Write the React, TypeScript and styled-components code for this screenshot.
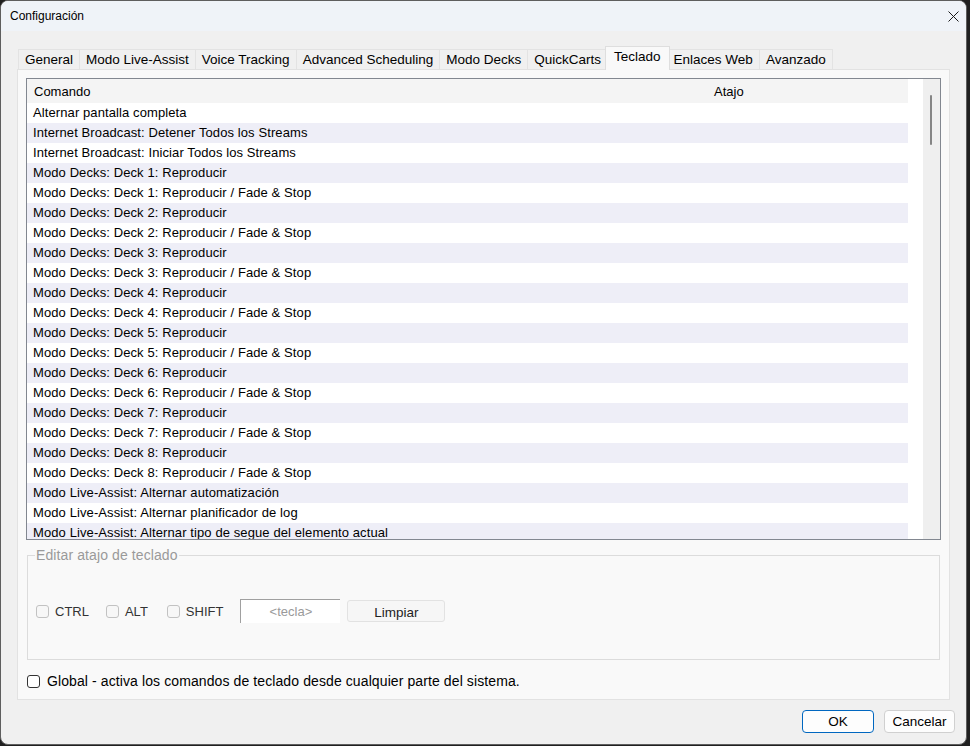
import React from "react";
import styled, { createGlobalStyle } from "styled-components";

const GlobalStyle = createGlobalStyle`
  html, body {
    margin: 0;
    padding: 0;
    background: #202020;
  }
  body {
    font-family: "Liberation Sans", Arial, sans-serif;
    font-size: 13px;
    color: #000;
  }
  * {
    box-sizing: border-box;
  }
`;

const TABS = [
  "General",
  "Modo Live-Assist",
  "Voice Tracking",
  "Advanced Scheduling",
  "Modo Decks",
  "QuickCarts",
  "Teclado",
  "Enlaces Web",
  "Avanzado",
];

const COMMANDS: string[] = [
  "Alternar pantalla completa",
  "Internet Broadcast: Detener Todos los Streams",
  "Internet Broadcast: Iniciar Todos los Streams",
];
for (let i = 1; i <= 8; i++) {
  COMMANDS.push(`Modo Decks: Deck ${i}: Reproducir`);
  COMMANDS.push(`Modo Decks: Deck ${i}: Reproducir / Fade & Stop`);
}
COMMANDS.push(
  "Modo Live-Assist: Alternar automatización",
  "Modo Live-Assist: Alternar planificador de log",
  "Modo Live-Assist: Alternar tipo de segue del elemento actual"
);

export default function App() {
  return (
    <>
      <GlobalStyle />
      <Window>
        <TitleBar>
          <Title>Configuración</Title>
          <svg width="11" height="11" viewBox="0 0 11 11" style={{ marginRight: 7 }}>
            <path d="M0.5 0.5 L10.5 10.5 M10.5 0.5 L0.5 10.5" stroke="#1a1a1a" strokeWidth="1" />
          </svg>
        </TitleBar>
        <Body>
          <TabStrip>
            {TABS.map((t) => (
              <Tab key={t} $active={t === "Teclado"}>
                {t}
              </Tab>
            ))}
          </TabStrip>
          <Panel>
            <ListBox>
              <ListContent>
                <HeaderRow>
                  <span>Comando</span>
                  <span>Atajo</span>
                </HeaderRow>
                <Rows>
                  {COMMANDS.map((c, i) => (
                    <Row key={c} $alt={i % 2 === 1}>
                      <span>{c}</span>
                      <span />
                    </Row>
                  ))}
                </Rows>
              </ListContent>
              <ScrollTrack>
                <ScrollThumb />
              </ScrollTrack>
            </ListBox>

            <GroupBox>
              <Legend>Editar atajo de teclado</Legend>
              <KeyRow>
                <CheckLabel $gap={17}>
                  <CheckBox $disabled />
                  CTRL
                </CheckLabel>
                <CheckLabel $gap={19}>
                  <CheckBox $disabled />
                  ALT
                </CheckLabel>
                <CheckLabel $gap={17}>
                  <CheckBox $disabled />
                  SHIFT
                </CheckLabel>
                <KeyField>&lt;tecla&gt;</KeyField>
                <FlatButton>Limpiar</FlatButton>
              </KeyRow>
            </GroupBox>

            <GlobalRow>
              <CheckBox />
              Global - activa los comandos de teclado desde cualquier parte del sistema.
            </GlobalRow>
          </Panel>
          <Footer>
            <DialogButton $primary>OK</DialogButton>
            <DialogButton>Cancelar</DialogButton>
          </Footer>
        </Body>
      </Window>
    </>
  );
}

const Window = styled.div`
  width: 967px;
  height: 745px;
  border: 1px solid #5e5e5e;
  border-radius: 8px;
  overflow: hidden;
  background: #f0f0f0;
  display: flex;
  flex-direction: column;
`;

const TitleBar = styled.div`
  height: 30px;
  flex: none;
  background: #eff3f8;
  display: flex;
  align-items: center;
  justify-content: space-between;
  padding-left: 9px;
`;

const Title = styled.span`
  font-size: 12px;
  color: #000;
`;

const Body = styled.div`
  flex: 1;
  display: flex;
  flex-direction: column;
  padding: 16px 11px 0 16px;
`;

const TabStrip = styled.div`
  display: flex;
  align-items: flex-end;
  height: 23px;
  padding-left: 2px;
  margin-bottom: -1px;
  position: relative;
  z-index: 1;
  font-size: 13.5px;
`;

const Tab = styled.div<{ $active?: boolean }>`
  position: relative;
  height: ${(p) => (p.$active ? "24px" : "20px")};
  line-height: ${(p) => (p.$active ? "20px" : "19px")};
  padding: ${(p) => (p.$active ? "0 8px" : "0 6px")};
  margin: ${(p) => (p.$active ? "0 -2px 0 -3px" : "0 0 1px -1px")};
  z-index: ${(p) => (p.$active ? 2 : 1)};
  background: ${(p) => (p.$active ? "#f9f9f9" : "#f0f0f0")};
  border: 1px solid ${(p) => (p.$active ? "#dedede" : "#e3e3e3")};
  border-bottom: none;
  white-space: nowrap;
  color: #000;
`;

const Panel = styled.div`
  height: 631px;
  margin-right: 5px;
  background: #f9f9f9;
  border: 1px solid #e2e2e2;
  padding: 8px;
  display: flex;
  flex-direction: column;
`;

const ListBox = styled.div`
  height: 462px;
  flex: none;
  border: 1px solid #828790;
  background: #fff;
  display: flex;
  overflow: hidden;
`;

const ListContent = styled.div`
  flex: 1;
  display: flex;
  flex-direction: column;
  overflow: hidden;
`;

const HeaderRow = styled.div`
  width: 881px;
  height: 24px;
  flex: none;
  background: #f4f4f4;
  display: grid;
  grid-template-columns: 680px 1fr;
  align-items: center;
  padding-left: 7px;
`;

const Rows = styled.div`
  flex: 1;
  overflow: hidden;
`;

const Row = styled.div<{ $alt?: boolean }>`
  width: 881px;
  height: 20px;
  line-height: 20px;
  display: grid;
  grid-template-columns: 681px 1fr;
  padding-left: 6px;
  white-space: nowrap;
  letter-spacing: 0.1px;
  background: ${(p) => (p.$alt ? "#eeeef7" : "#fff")};
`;

const ScrollTrack = styled.div`
  width: 17px;
  flex: none;
  background: #efefef;
  padding: 16px 0 0 7px;
`;

const ScrollThumb = styled.div`
  width: 2px;
  height: 50px;
  border-radius: 1px;
  background: #858585;
`;

const GroupBox = styled.fieldset`
  margin: 8px 1px 0;
  padding: 0 8px;
  height: 112px;
  border: 1px solid #dcdcdc;
  min-width: 0;
`;

const Legend = styled.legend`
  color: #9a9a9a;
  padding: 0 1px;
  margin-left: -1px;
  line-height: 15px;
  font-size: 14px;
  letter-spacing: 0.1px;
`;

const KeyRow = styled.div`
  display: flex;
  align-items: center;
  margin-top: 36px;
  height: 24px;
`;

const CheckLabel = styled.label<{ $gap: number }>`
  display: flex;
  align-items: center;
  gap: 6px;
  color: #333;
  margin-right: ${(p) => p.$gap}px;
`;

const CheckBox = styled.span<{ $disabled?: boolean }>`
  width: 13px;
  height: 13px;
  flex: none;
  border-radius: 3px;
  border: 1px solid ${(p) => (p.$disabled ? "#c2c2c2" : "#333")};
  background: ${(p) => (p.$disabled ? "#f7f7f7" : "#fff")};
`;

const KeyField = styled.div`
  width: 100px;
  height: 24px;
  background: #fff;
  border-top: 1px solid #a0a0a0;
  border-left: 1px solid #a0a0a0;
  color: #9a9a9a;
  display: flex;
  align-items: center;
  justify-content: center;
  margin-right: 7px;
`;

const FlatButton = styled.div`
  width: 98px;
  height: 22px;
  background: #f6f6f6;
  border: 1px solid #e2e2e2;
  border-radius: 3px;
  display: flex;
  align-items: center;
  justify-content: center;
  padding-top: 2px;
  color: #222;
  font-size: 13.5px;
`;

const GlobalRow = styled.label`
  display: flex;
  align-items: center;
  gap: 7px;
  margin-top: 13px;
  padding-left: 1px;
  color: #000;
  font-size: 14px;
  letter-spacing: 0.1px;
`;

const Footer = styled.div`
  display: flex;
  justify-content: flex-end;
  gap: 10px;
  padding-top: 10px;
`;

const DialogButton = styled.div<{ $primary?: boolean }>`
  width: ${(p) => (p.$primary ? "72px" : "71px")};
  height: 23px;
  border-radius: 4px;
  background: #fdfdfd;
  border: 1px solid ${(p) => (p.$primary ? "#0067c0" : "#d0d0d0")};
  display: flex;
  align-items: center;
  justify-content: center;
  color: #000;
  font-size: 13.5px;
`;
